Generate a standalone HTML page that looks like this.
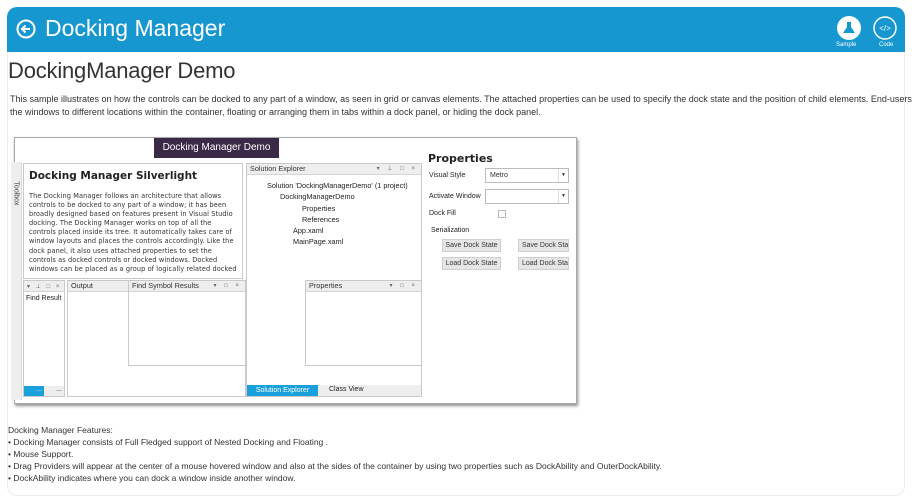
<!DOCTYPE html>
<html><head><meta charset="utf-8"><style>
*{box-sizing:border-box;margin:0;padding:0}
body{width:912px;height:504px;background:#fff;font-family:"Liberation Sans",sans-serif;position:relative;overflow:hidden;color:#333}
.abs{position:absolute}
.frame{left:7px;top:7px;width:898px;height:489px;border:1px solid #e8edf0;border-radius:10px}
.hdr{left:7px;top:7px;width:898px;height:45px;background:#1797cf;border-radius:10px 10px 0 0;color:#fff}
.p{font-size:7px;color:#222}
.panel{background:#fff;border:1px solid #c9c9c9}
.ph{background:#eeeeee;border-bottom:1px solid #d5d5d5;height:11px;font-size:7.3px;line-height:10px;padding-left:3px;color:#333}
.ic{position:absolute;right:3px;top:0;font-size:6px;color:#666;letter-spacing:3px}
.btn{background:#e6e6e6;border:1px solid #cfcfcf;font-size:7px;line-height:11px;text-align:center;color:#333}
</style></head><body>
<div class="abs frame"></div>
<div class="abs hdr">
 <svg class="abs" style="left:9px;top:12px" width="20" height="20" viewBox="0 0 20 20"><circle cx="10" cy="10" r="8.5" fill="none" stroke="#fff" stroke-width="2"/><path d="M14 10H6M9.5 6.5L6 10l3.5 3.5" fill="none" stroke="#fff" stroke-width="2"/></svg>
 <div class="abs" style="left:38px;top:6px;font-size:23px;line-height:30px">Docking Manager</div>
 <svg class="abs" style="left:830px;top:9px" width="24" height="24" viewBox="0 0 24 24"><circle cx="12" cy="12" r="12" fill="#fff"/><path d="M10 6v5l-4 6h12l-4-6V6" fill="#1797cf"/></svg>
 <div class="abs" style="left:829px;top:35px;font-size:6px">Sample</div>
 <svg class="abs" style="left:866px;top:9px" width="24" height="24" viewBox="0 0 24 24"><circle cx="12" cy="12" r="11" fill="none" stroke="#fff" stroke-width="1.5"/><text x="12" y="15" font-size="8" fill="#fff" text-anchor="middle" font-family="Liberation Sans">&lt;/&gt;</text></svg>
 <div class="abs" style="left:872px;top:35px;font-size:6px">Code</div>
</div>
<div class="abs" style="left:8px;top:57px;font-size:22px;line-height:28px;color:#333;letter-spacing:-0.2px">DockingManager Demo</div>
<div class="abs" style="left:10px;top:93px;font-size:9px;line-height:13px;color:#333;white-space:nowrap">This sample illustrates on how the controls can be docked to any part of a window, as seen in grid or canvas elements. The attached properties can be used to specify the dock state and the position of child elements. End-users c<br>the windows to different locations within the container, floating or arranging them in tabs within a dock panel, or hiding the dock panel.</div>

<div class="abs" style="left:14px;top:137px;width:563px;height:267px;background:#fff;border:1px solid #aaa;box-shadow:1px 2px 3px rgba(0,0,0,.45)"></div>
<div class="abs" style="left:154px;top:138px;width:125px;height:20px;background:#3a2a47;color:#fff;font-size:10px;line-height:20px;text-align:center">Docking Manager Demo</div>
<div class="abs" style="left:11px;top:162px;width:11px;height:238px;background:#eee;border-right:1px solid #ddd"></div>
<div class="abs" style="left:4px;top:190px;font-size:7px;transform:rotate(90deg);color:#444">Toolbox</div>

<div class="abs panel" style="left:23px;top:163px;width:220px;height:116px;overflow:hidden;padding:6px 5px">
 <div style="font-weight:bold;font-size:10.5px;color:#222;font-family:'DejaVu Sans',sans-serif">Docking Manager Silverlight</div>
 <div style="font-size:7.3px;line-height:9.1px;margin-top:9px;color:#333;font-family:'DejaVu Sans Condensed','DejaVu Sans',sans-serif;letter-spacing:0.1px"> The Docking Manager follows an architecture that allows controls to be docked to any part of a window; it has been broadly designed based on features present in Visual Studio docking. The Docking Manager works on top of all the controls placed inside its tree. It automatically takes care of window layouts and places the controls accordingly. Like the dock panel, it also uses attached properties to set the controls as docked controls or docked windows. Docked windows can be placed as a group of logically related docked</div>
</div>

<div class="abs panel" style="left:23px;top:280px;width:42px;height:117px">
 <div class="ph"><span style="font-size:6px;color:#666;letter-spacing:2px">▾ ⊥ □ ×</span></div>
 <div class="p" style="padding:3px 2px">Find Result</div>
 <div class="abs" style="left:0;bottom:0;width:20px;height:10px;background:#1aa0dd;color:#fff;font-size:7px;text-align:right;padding-right:2px;line-height:7px">...</div>
 <div class="abs" style="left:20px;bottom:0;width:20px;height:10px;background:#eee;font-size:7px;text-align:right;padding-right:2px;line-height:7px">...</div>
</div>
<div class="abs panel" style="left:67px;top:280px;width:179px;height:117px">
 <div class="ph" style="width:61px">Output</div>
</div>
<div class="abs panel" style="left:128px;top:280px;width:118px;height:86px">
 <div class="ph">Find Symbol Results<span class="ic">▾ □ ×</span></div>
</div>

<div class="abs panel" style="left:246px;top:163px;width:176px;height:234px">
 <div class="ph">Solution Explorer<span class="ic">▾ ⊥ □ ×</span></div>
 <div class="p" style="position:absolute;left:20px;top:16px;line-height:11.3px;font-size:7.3px">Solution 'DockingManagerDemo' (1 project)<br><span style="padding-left:13px">DockingManagerDemo</span><br><span style="padding-left:35px">Properties</span><br><span style="padding-left:35px">References</span><br><span style="padding-left:26px">App.xaml</span><br><span style="padding-left:26px">MainPage.xaml</span></div>
 <div class="abs" style="left:0;bottom:0;width:174px;height:11px;background:#eee"></div>
 <div class="abs" style="left:0;bottom:0;width:71px;height:11px;background:#1aa0dd;color:#fff;font-size:7px;line-height:11px;text-align:center">Solution Explorer</div>
 <div class="abs p" style="left:82px;bottom:1px;line-height:10px">Class View</div>
</div>
<div class="abs panel" style="left:305px;top:280px;width:117px;height:86px">
 <div class="ph">Properties<span class="ic">▾ □ ×</span></div>
</div>

<div class="abs" style="left:428px;top:152px;font-size:11px;font-weight:bold;color:#222;font-family:'DejaVu Sans',sans-serif">Properties</div>
<div class="abs p" style="left:429px;top:172px">Visual Style</div>
<div class="abs" style="left:485px;top:168px;width:84px;height:15px;border:1px solid #bbb;font-size:7px;line-height:13px;padding-left:4px">Metro<span style="position:absolute;right:0;top:0;width:10px;border-left:1px solid #ddd;text-align:center;font-size:5px">▼</span></div>
<div class="abs p" style="left:429px;top:193px">Activate Window</div>
<div class="abs" style="left:485px;top:189px;width:84px;height:15px;border:1px solid #bbb"><span style="position:absolute;right:0;top:0;width:10px;border-left:1px solid #ddd;text-align:center;font-size:5px;line-height:13px">▼</span></div>
<div class="abs p" style="left:429px;top:210px">Dock Fill</div>
<div class="abs" style="left:498px;top:210px;width:8px;height:8px;border:1px solid #bbb"></div>
<div class="abs p" style="left:431px;top:227px">Serialization</div>
<div class="abs btn" style="left:442px;top:239px;width:59px;height:13px">Save Dock State</div>
<div class="abs btn" style="left:442px;top:257px;width:59px;height:13px">Load Dock State</div>
<div class="abs btn" style="left:518px;top:239px;width:51px;height:13px;overflow:hidden;white-space:nowrap;text-align:left;padding-left:3px">Save Dock State</div>
<div class="abs btn" style="left:518px;top:257px;width:51px;height:13px;overflow:hidden;white-space:nowrap;text-align:left;padding-left:3px">Load Dock State</div>

<div class="abs" style="left:8px;top:424px;font-size:8.5px;line-height:12px;color:#333;white-space:nowrap">Docking Manager Features:<br>• Docking Manager consists of Full Fledged support of Nested Docking and Floating .<br>• Mouse Support.<br>• Drag Providers will appear at the center of a mouse hovered window and also at the sides of the container by using two properties such as DockAbility and OuterDockAbility.<br>• DockAbility indicates where you can dock a window inside another window.</div>
</body></html>
